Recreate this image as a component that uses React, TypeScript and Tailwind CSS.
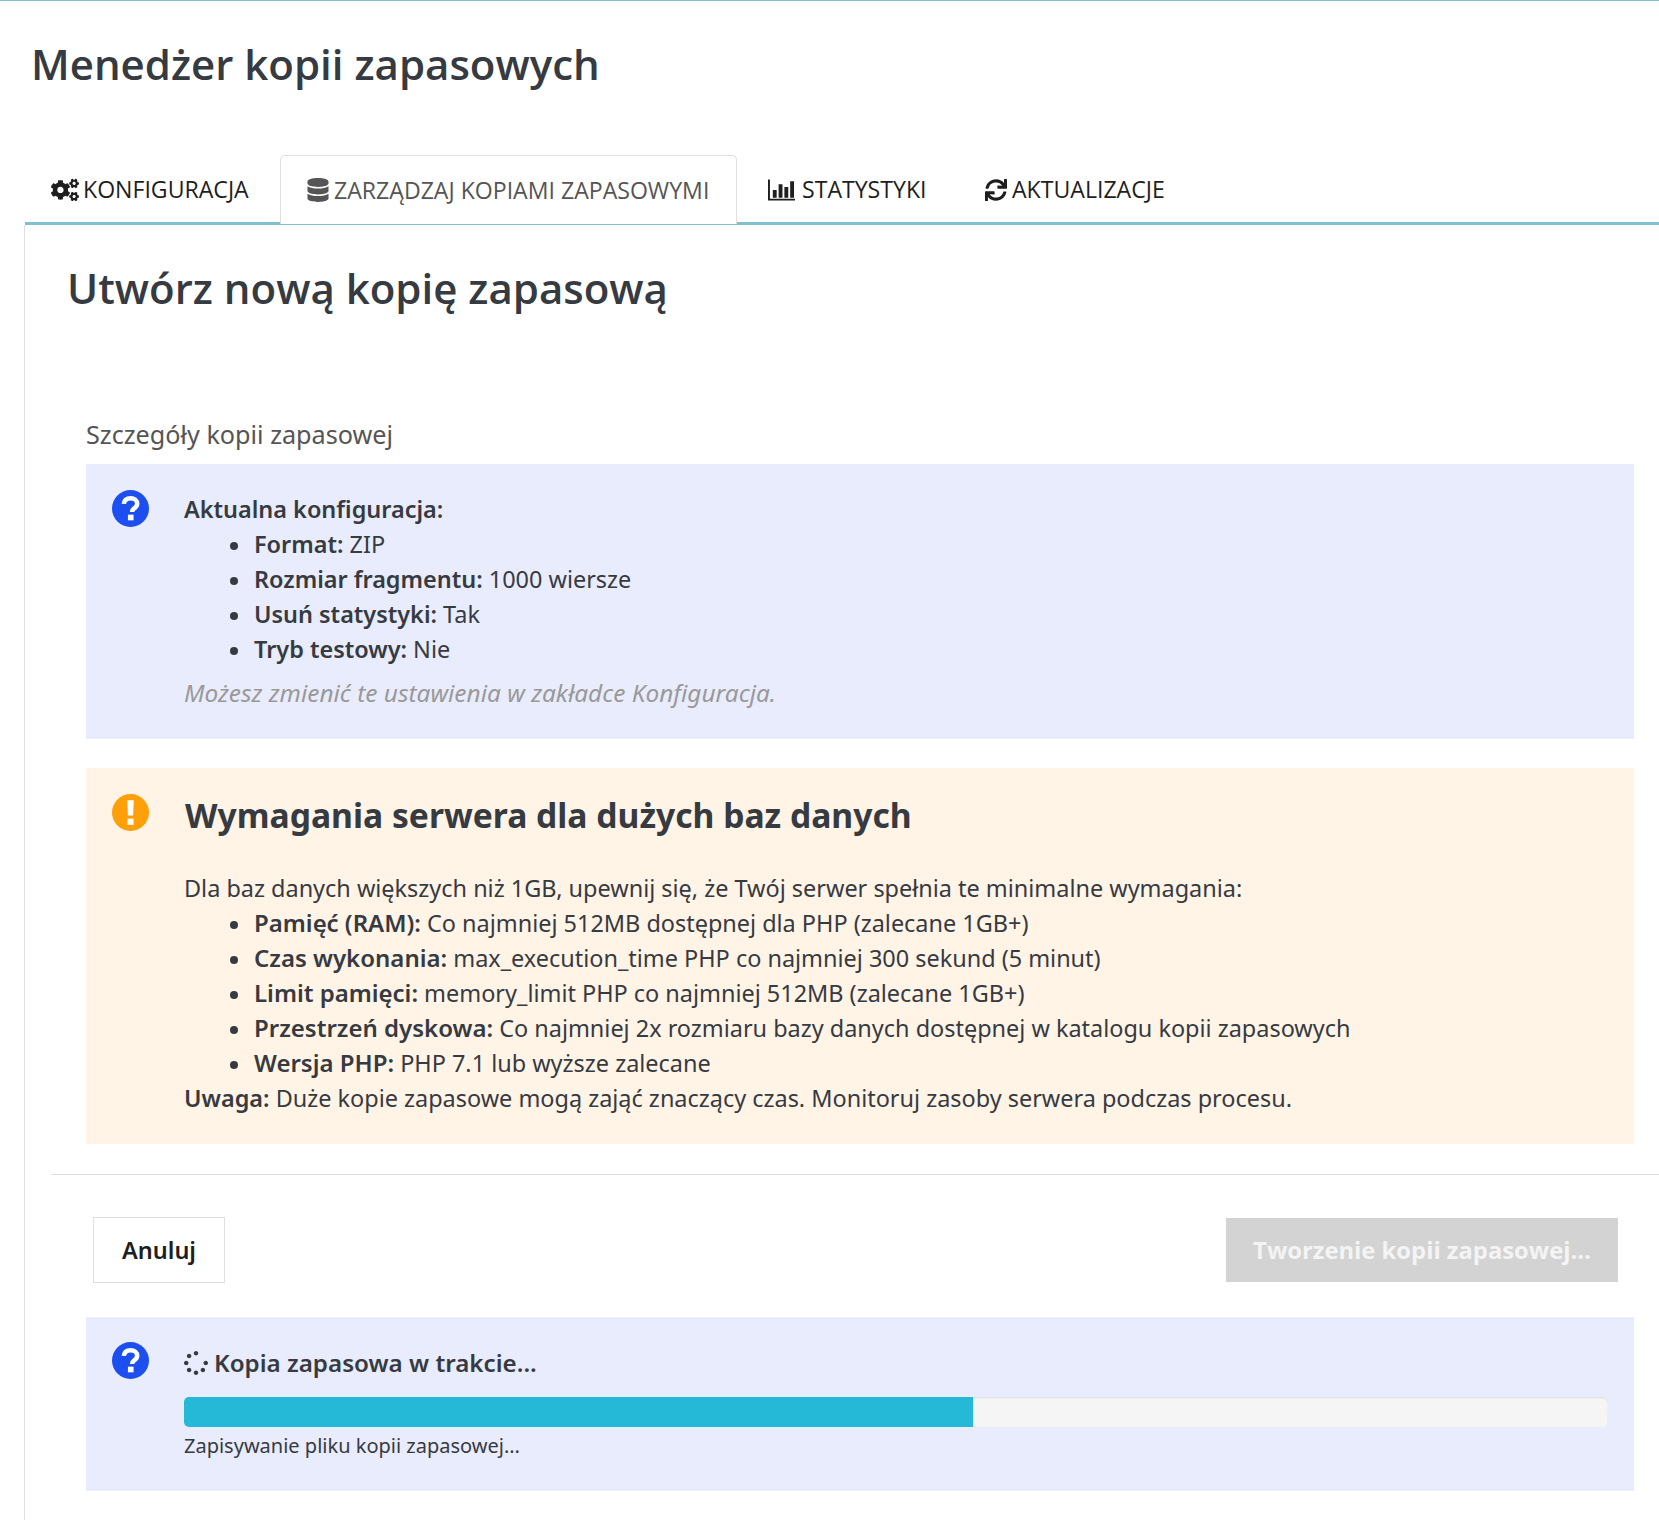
import React from 'react';
import { FaCogs, FaDatabase, FaSync, FaSpinner } from 'react-icons/fa';

const BarsIcon = () => (
  <svg viewBox="0 0 28 22" className="h-[22px] w-[27px] fill-current">
    <path d="M0 0h2v20h26v2H0z" />
    <path d="M5 11h4v8H5zM11 5h4v14h-4zM17 8h4v11h-4zM23 2h4v17h-4z" />
  </svg>
);

const QuestionIcon = () => (
  <svg viewBox="0 0 36 36" className="h-[37px] w-[37px]">
    <circle cx="18" cy="18" r="18" fill="#1d4ff0" />
    <path d="M11.5 13.5c.4-3.6 3-5.5 6.5-5.5 3.800 0 6.500 2.200 6.500 5.400 0 2.500-1.500 3.600-3.200 4.700-1.200.8-1.700 1.400-1.700 3.400" fill="none" stroke="#fff" strokeWidth="4.400" />
    <rect x="15.500" y="24" width="5.500" height="5.500" fill="#fff" />
  </svg>
);

const WarningIcon = () => (
  <svg viewBox="0 0 36 36" className="h-[37px] w-[37px]">
    <circle cx="18" cy="18" r="18" fill="#ff9f0a" />
    <path d="M14.800 6h6.400l-.7 15h-5z" fill="#fff" />
    <rect x="15" y="24" width="6" height="6" fill="#fff" />
  </svg>
);

const tabClass = 'flex items-center h-[69px] text-[23.1px] text-[#1e1e1e]';
const rowClass = 'relative pl-[70px] before:absolute before:left-[46px] before:top-[15px] before:h-[8px] before:w-[8px] before:rounded-full before:bg-[#363a41]';

const Item = ({ label, value }: { label: string; value: string }) => (
  <li className={rowClass}>
    <b className="font-semibold">{label}</b> {value}
  </li>
);

const App: React.FC = () => {
  return (
    <div className="flex h-[1520px] w-[1659px] flex-col overflow-hidden bg-white font-['Noto_Sans',sans-serif] text-[23.45px] leading-[35px] text-[#363a41]">
      <div className="h-px bg-[#7fc0d0]" />

      {/* Title */}
      <h1 className="h-[154px] pl-[31px] pt-[35px] font-['Open_Sans',sans-serif] text-[42px] leading-[56px] font-semibold">
        Menedżer kopii zapasowych
      </h1>

      {/* Tabs */}
      <div className="ml-[25px] flex h-[70px] border-b-[3px] border-[#7fc0d0] pl-[26px]">
        <div className="flex font-['Open_Sans',sans-serif]">
          <div className={`${tabClass} w-[229px] gap-[4px]`}>
            <FaCogs size={28} />
            <span>KONFIGURACJA</span>
          </div>
          <div className="-mb-[2px] flex h-[69px] w-[457px] items-center gap-[4px] rounded-t-[5px] border border-b-0 border-[#dfdfdf] bg-white pl-[25px] text-[23.1px] text-[#555]">
            <FaDatabase size={24} />
            <span>ZARZĄDZAJ KOPIAMI ZAPASOWYMI</span>
          </div>
          <div className={`${tabClass} ml-[31px] w-[217px] gap-[7px]`}>
            <BarsIcon />
            <span>STATYSTYKI</span>
          </div>
          <div className={`${tabClass} gap-[5px]`}>
            <FaSync size={22} />
            <span>AKTUALIZACJE</span>
          </div>
        </div>
      </div>

      {/* Panel */}
      <div className="ml-6 flex-1 border-l border-[#dfdfdf] pl-[26px]">
        <h2 className="ml-[16px] h-[194px] pt-[35px] font-['Open_Sans',sans-serif] text-[42px] leading-[56px] font-semibold">
          Utwórz nową kopię zapasową
        </h2>

        <div className="-mt-[2px] mb-[12px] ml-[35px] text-[25.2px] leading-[35px] text-[#555]">Szczegóły kopii zapasowej</div>

        {/* Config */}
        <div className="ml-[35px] mr-[25px] flex h-[275px] bg-[#e9ecfc]">
          <div className="w-[98px] pl-[26px] pt-[26px]">
            <QuestionIcon />
          </div>
          <div className="pt-[28px]">
            <div className="font-semibold">Aktualna konfiguracja:</div>
            <ul>
              <Item label="Format:" value="ZIP" />
              <Item label="Rozmiar fragmentu:" value="1000 wiersze" />
              <Item label="Usuń statystyki:" value="Tak" />
              <Item label="Tryb testowy:" value="Nie" />
            </ul>
            <div className="mt-[8px] text-[24.4px] italic text-[#999]">Możesz zmienić te ustawienia w zakładce Konfiguracja.</div>
          </div>
        </div>

        {/* Warning */}
        <div className="ml-[35px] mr-[25px] mt-[29px] flex h-[376px] bg-[#fff4e6]">
          <div className="w-[98px] pl-[26px] pt-[26px]">
            <WarningIcon />
          </div>
          <div className="pt-[23px]">
            <h3 className="mb-[32px] pl-px text-[33.65px] leading-[48px] font-bold">Wymagania serwera dla dużych baz danych</h3>
            <div>Dla baz danych większych niż 1GB, upewnij się, że Twój serwer spełnia te minimalne wymagania:</div>
            <ul className="[&_b]:text-[24px] [&_b]:leading-none">
              <Item label="Pamięć (RAM):" value="Co najmniej 512MB dostępnej dla PHP (zalecane 1GB+)" />
              <Item label="Czas wykonania:" value="max_execution_time PHP co najmniej 300 sekund (5 minut)" />
              <Item label="Limit pamięci:" value="memory_limit PHP co najmniej 512MB (zalecane 1GB+)" />
              <Item label="Przestrzeń dyskowa:" value="Co najmniej 2x rozmiaru bazy danych dostępnej w katalogu kopii zapasowych" />
              <Item label="Wersja PHP:" value="PHP 7.1 lub wyższe zalecane" />
            </ul>
            <div><b className="font-semibold">Uwaga:</b> Duże kopie zapasowe mogą zająć znaczący czas. Monitoruj zasoby serwera podczas procesu.</div>
          </div>
        </div>

        <div className="mt-[30px] h-px bg-[#dfdfdf]" />

        {/* Actions */}
        <div className="ml-[42px] mr-[41px] mt-[42px] flex items-center justify-between">
          <button className="h-[66px] w-[132px] border border-[#dfdfdf] bg-white text-[23.5px] font-semibold text-[#1e1e1e]">Anuluj</button>
          <button className="h-[64px] w-[392px] bg-[#d3d3d3] font-['Open_Sans',sans-serif] text-[23.8px] font-bold text-[#f4f4f4]">Tworzenie kopii zapasowej...</button>
        </div>

        {/* Progress */}
        <div className="ml-[35px] mr-[25px] mt-[34px] flex h-[174px] bg-[#e9ecfc]">
          <div className="w-[98px] pl-[26px] pt-[25px]">
            <QuestionIcon />
          </div>
          <div className="flex-1 pr-[26px] pt-[28px]">
            <div className="flex items-center gap-[6px] text-[24.2px] font-semibold">
              <FaSpinner size={24} />
              <span>Kopia zapasowa w trakcie...</span>
            </div>
            <div className="mt-[17px] h-[30px] overflow-hidden rounded-[5px] bg-[#f5f5f5] shadow-[inset_0_1px_2px_rgba(0,0,0,0.1)]">
              <div className="h-full w-[55.4%] bg-[#25b9d7]" />
            </div>
            <div className="mt-[3px] text-[20px] leading-[32px]">Zapisywanie pliku kopii zapasowej...</div>
          </div>
        </div>
      </div>
    </div>
  );
};

export default App;
